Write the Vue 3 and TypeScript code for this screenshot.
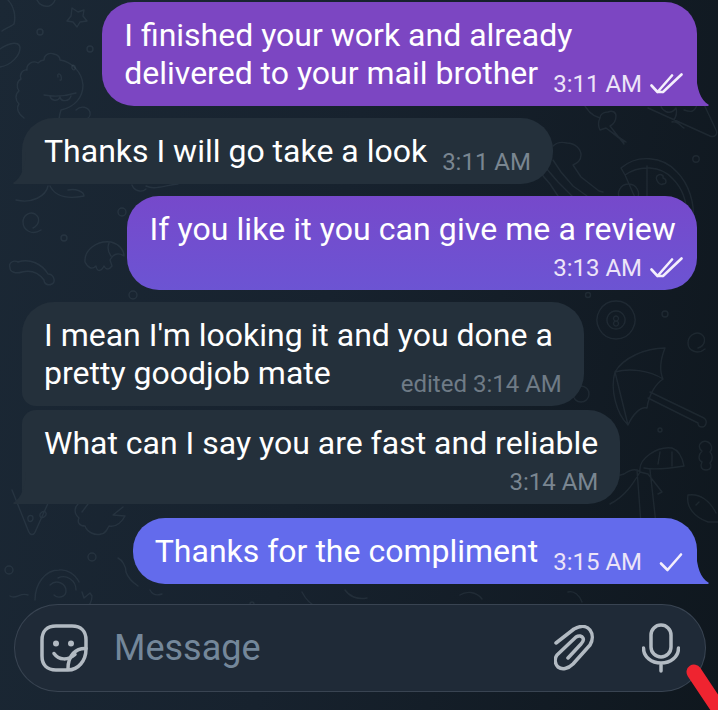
<script setup lang="ts">
interface Msg {
  out: boolean
  lines: string[]
  time: string
  layout: 'inline' | 'below'
  tail: boolean
  check?: 'single' | 'double'
  tone: string
  edited?: boolean
}

const messages: Msg[] = [
  { out: true, lines: ['I finished your work and already', 'delivered to your mail brother'], time: '3:11 AM', layout: 'inline', tail: true, check: 'double', tone: 'violet' },
  { out: false, lines: ['Thanks I will go take a look'], time: '3:11 AM', layout: 'inline', tail: true, tone: 'dark' },
  { out: true, lines: ['If you like it you can give me a review'], time: '3:13 AM', layout: 'below', tail: false, check: 'double', tone: 'indigo' },
  { out: false, lines: ["I mean I'm looking it and you done a", 'pretty goodjob mate'], time: 'edited 3:14 AM', layout: 'inline', tail: false, tone: 'dark', edited: true },
  { out: false, lines: ['What can I say you are fast and reliable'], time: '3:14 AM', layout: 'below', tail: true, tone: 'dark' },
  { out: true, lines: ['Thanks for the compliment'], time: '3:15 AM', layout: 'inline', tail: true, check: 'single', tone: 'blue' }
]

const doodles: string[] = [
  // star
  'M72 8l6 4 6-2-1 6 4 5-7 1-3 5-4-5-6-1 4-5z',
  // arcs top left
  'M8 0c6 6 8 16 6 24-2 2-8 4-12 7M37 0c2 5 8 7 12 6 3-1 5-3 6-6M0 67c12-2 20-12 20-19 0-4-4-6-10-4-4 1-7 3-10 5',
  // dino
  'M24 118c-6-4-8-10-5-14-4-4-4-10 0-13-3-4-2-10 2-12-2-5 2-10 6-9-1-6 6-10 11-7 2-2 3-3 6-3 0-5 5-8 10-6 4 1 6 3 6 6 12 2 22 12 23 25 0 12-8 22-22 25-2 6-2 10-3 14',
  'M44 95c10 2 22 1 32-2M50 96c1 5 8 6 10 1M60 97c1 5 9 5 11-1M58 77c-1-4 2-4 3-1 1 3 0 5-1 4M72 68c-1-3 3-4 3-1 1 3-2 4-3 1M76 110c5-5 12-3 14 2 1 4-2 7-6 8',
  // squid and pizza slice top right
  'M582 100c4 10 10 16 18 18 0-4 4-6 8-6 4-2 8 0 8 4 0 4-2 8-6 10l14 18M600 118c-2 4-2 8 0 12l6-2 18 14M606 128l20 14',
  'M648 108l62 28c5 2 8-2 6-6l-14-30M660 100c0 12 10 16 16 8 2 8-2 12-4 14 6-2 10 6 12 6M684 110c6 2 12 4 14-10',
  // jellyfish
  'M553 146c4-4 10-4 14-3 8 0 14 6 14 12 0 6-4 8-8 10l8 12 18 14 4 1M553 160l8 12 12 14 14 10M546 168l12 14 14 14 12 8M538 170l12 14 8 12 14 10',
  // pizza
  'M621 168c16-14 42-12 56 4 12 12 18 32 16 48M621 168l4 7c14-10 36-10 48 4 10 10 14 24 14 38M625 175l16 36 4 10M647 166v55M628 184a10 10 0 1 0 1 0M657 176c3-3 7-1 6 2 4 1 4 6 0 6-4 2-8-5-6-8',
  // 8 ball
  'M616 301a19 19 0 1 0 .01 0M616 311a9 9 0 1 0 .01 0M616 316a2.500 2.500 0 1 0 .01 0M616 321a2.500 2.500 0 1 0 .01 0',
  // umbrella
  'M615 372c8-14 30-24 50-24-4 10-6 22-2 31-6 4-14 14-16 29-6-2-14 6-19 17-12-12-18-36-13-53zM615 372c14-4 34-2 48 7M615 372l13 53M650 392l54 26c4 3 2 9-2 9-3 0-4-2-4-4M648 398l50 25',
  // palm
  'M610 478l14-4c6-4 12-6 16-2-2-14 18-26 32-24 6 2 10 8 12 18-12 2-30 4-40 2M640 472c-6 10-14 24-30 32M640 472l8 2 14 18-4 2M637 470l4 54M650 470l6 54M660 452l-2 12M672 452l0 14',
  // candy
  'M702 442c-4 3-3 7 0 9-4 4-4 9 0 11-2 4-1 8 4 8 5 0 6-4 4-7 3-3 3-8 0-11 3-3 2-8-2-10-2-1-4-1-6 0z',
  // fish
  'M688 495c12-2 22 6 28 18M688 495c-2 12 6 22 20 27l10 0M696 505l3-3',
  // spiral
  'M698 348c7-2 9-10 3-14-6-3-13 2-13 9 0 8 10 12 17 6',
  'M33 228c6-3 8-10 2-14-6-3-12 2-12 8 0 8 9 14 18 8',
  // shrimp
  'M85 262c-1-12 12-22 26-20 8 2 13 8 13 14-6-4-11-2-14 4l2 6c-3 4-6 4-8 0-3 6-7 6-8 0-4 4-8 2-11-4zM109 243c-2 5-1 9 2 13',
  // arch
  'M10 268c-2-6 4-8 8-6 12-4 24 2 30 12 6 0 8 8 4 10-4 2-8 0-8-4-6-8-14-10-22-8-6 2-12 0-12-4z',
  // figure below bubble 2
  'M16 200c16 4 30-4 32-14M50 186c4 8 14 14 34 10 0-4-8-8-16-6M132 185c2 6 10 8 14 4M146 186c8 4 16 0 32-2',
  // slice bottom left
  'M12 490l16 40c2 6 6 6 8 0l18-40M28 519c-1-4 5-5 5-1 0 4-5 5-5 1zM40 516c-1-3 5-7 6-3 1 3-5 7-6 3zM25 490l4 6',
  // cloud
  'M78 504c-4 4-4 10 1 14-2 4 0 8 6 8 2 6 10 10 16 8 4 0 6-4 8-8 8 2 14-6 16-10l-12-1 10-8M88 504l-6 8',
  // snail
  'M35 600c0-16 10-30 24-30 8-1 16 4 20 12M58 578c8-4 18 2 18 12M50 585c6-6 16-2 16 6 0 6-8 8-12 4M82 592l2 6 6-5 2 3c0 6-2 10-8 14M10 596c6 4 10-4 18-1',
  // other scraps
  'M118 558c4 2 8 8 8 14 2 6 6 10 12 14M150 590c2 4 6 6 12 4',
  'M302 592c4 8 8 12 14 14M345 590c4 6 12 10 22 8M460 595c6-4 16-4 22 4M568 592c6-2 12 4 14 10'
]

const circles: [number, number, number][] = [
  [40, 32, 3], [90, 49, 3], [696, 159, 3.200], [588, 295, 2.500], [665, 314, 3], [660, 430, 2], [122, 212, 4], [64, 238, 3], [133, 295, 4], [92, 557, 4], [9, 570, 4], [252, 604, 2], [581, 394, 8]
]
</script>

<template>
  <div class="screen">
    <svg class="wallpaper" width="718" height="710" viewBox="0 0 718 710" fill="none">
      <path v-for="(d, i) in doodles" :key="i" :d="d" />
      <circle v-for="(c, i) in circles" :key="'c' + i" :cx="c[0]" :cy="c[1]" :r="c[2]" />
    </svg>

    <div class="messages">
      <div
        v-for="(m, i) in messages"
        :key="i"
        class="bubble"
        :class="[m.out ? 'out' : 'in', m.tone, 'm' + i]"
      >
        <div v-for="(line, j) in m.lines" :key="j" class="line">
          <span class="text">{{ line }}</span>
          <span v-if="m.layout === 'inline' && j === m.lines.length - 1" class="meta" :class="{ edited: m.edited }">
            <span>{{ m.time }}</span>
            <svg v-if="m.check === 'double'" class="tick" width="34" height="24" viewBox="0 0 34 24" fill="none">
              <path d="M1.500 13.500 7.500 20 22 3.500M13 20 31.500 2.500M8 20h5" />
            </svg>
            <svg v-if="m.check === 'single'" class="tick" width="34" height="24" viewBox="0 0 34 24" fill="none">
              <path d="M11 13.500 17.500 20 31 4.500" />
            </svg>
          </span>
        </div>
        <div v-if="m.layout === 'below'" class="meta below">
          <span>{{ m.time }}</span>
          <svg v-if="m.check === 'double'" class="tick" width="34" height="24" viewBox="0 0 34 24" fill="none">
            <path d="M1.500 13.500 7.500 20 22 3.500M13 20 31.500 2.500M8 20h5" />
          </svg>
        </div>
        <svg v-if="m.tail && m.out" class="tail tail-out" width="14" height="32" viewBox="0 0 14 32">
          <path d="M0 0C1 14 4 26 13 31l-1 1H0Z" />
        </svg>
        <svg v-if="m.tail && !m.out" class="tail tail-in" width="14" height="32" viewBox="0 0 14 32">
          <path d="M14 0C13 14 10 26 1 31l1 1H14Z" />
        </svg>
      </div>
    </div>

    <div class="composer">
      <svg class="sticker" width="48" height="48" viewBox="0 0 48 48" fill="none">
        <path d="M28 46H16C7 46 2 41 2 32V16C2 7 7 2 16 2h16c9 0 14 5 14 14v9C46 37 38 46 28 46Z" />
        <path d="M46 24.500C36 24 28 31 28 45" />
        <path d="M14 29.500c5 7 14 7 21 1" />
        <circle class="dot" cx="16" cy="19.500" r="3" />
        <circle class="dot" cx="31" cy="19.500" r="3" />
      </svg>
      <span class="placeholder">Message</span>
      <svg class="clip" width="42" height="46" viewBox="0 0 42 46" fill="none">
        <path d="M2 18 20 4C27 0 33 1 36 5 39 9 39 15 36 20L19 39C14 44 8 45 4 42 1 39 0 34 3 30L22 12C25 10 28 11 29 13 30 15 29 17 27 19L14 33" />
      </svg>
      <svg class="mic" width="38" height="50" viewBox="0 0 38 50" fill="none">
        <rect x="9" y="2" width="20" height="32" rx="10" />
        <path d="M1.500 25c0 9 8 15 17.500 15s17.500-6 17.500-15M19 40v8" />
      </svg>
    </div>

    <svg class="scribble" width="40" height="50" viewBox="0 0 40 50" fill="none">
      <path d="M16 12 44 54" />
    </svg>
  </div>
</template>

<style>
html,
body {
  margin: 0;
  background: #141d27;
}
</style>

<style scoped>
.screen {
  position: relative;
  width: 718px;
  height: 710px;
  overflow: hidden;
  box-sizing: border-box;
  padding-top: 2px;
  font-family: Roboto, "Liberation Sans", sans-serif;
  background: linear-gradient(100deg, #1b2835 0%, #17222e 45%, #0f171e 100%);
}
.wallpaper {
  position: absolute;
  inset: 0;
  stroke: rgba(190, 215, 235, 0.08);
  stroke-width: 1.400;
  stroke-linecap: round;
  stroke-linejoin: round;
}
.messages {
  position: relative;
  display: flex;
  flex-direction: column;
  gap: 12px;
  padding: 0 21px 0 22px;
}
.bubble {
  position: relative;
  box-sizing: border-box;
  padding: 14px 13px 14px 22px;
  color: #fff;
  font-size: 32px;
  line-height: 38px;
}
.out {
  align-self: flex-end;
  border-radius: 32px 32px 0 32px;
}
.in {
  align-self: flex-start;
  border-radius: 32px 32px 32px 0;
  padding-right: 22px;
}
.violet {
  background: #7c46c2;
  fill: #7c46c2;
}
.indigo {
  background: linear-gradient(180deg, #7649cb, #6c54d3);
  padding-right: 21px;
  border-bottom-right-radius: 32px;
  letter-spacing: 0.08px;
}
.blue {
  background: #636bec;
  fill: #636bec;
}
.dark {
  background: #24303b;
  fill: #24303b;
}
.m3 {
  border-bottom-left-radius: 14px;
  margin-bottom: -8px;
}
.m4 {
  border-top-left-radius: 14px;
  margin-bottom: 2px;
}
.line {
  display: flex;
  justify-content: space-between;
  align-items: flex-end;
}
.text {
  white-space: nowrap;
}
.meta {
  display: flex;
  align-items: center;
  justify-content: flex-end;
  margin-left: 15px;
  margin-bottom: -6px;
  font-size: 24px;
  line-height: 28px;
  letter-spacing: 0;
  white-space: nowrap;
}
.out .meta {
  color: #ece4f8;
}
.in .meta {
  color: #7a8691;
}
.meta.below {
  margin-top: 6px;
}
.indigo .meta.below {
  margin-right: -8px;
}
.meta.edited {
  margin-left: 70px;
  color: #6f7b86;
}
.tick {
  margin-left: 8px;
  stroke: #f4effc;
  stroke-width: 2.600;
  stroke-linecap: round;
  stroke-linejoin: round;
}
.tail {
  position: absolute;
  bottom: 0;
}
.tail-out {
  right: -13px;
}
.tail-in {
  left: -10px;
}
.composer {
  position: relative;
  box-sizing: border-box;
  display: flex;
  align-items: center;
  width: 692px;
  height: 88px;
  margin: 20px 0 0 14px;
  padding: 0 25px 0 25px;
  border: 1px solid rgba(190, 205, 225, 0.16);
  border-radius: 44px;
  background: #1f2a37;
}
.composer svg {
  flex: none;
  stroke: #b2bac2;
  stroke-width: 3.500;
  stroke-linecap: round;
  stroke-linejoin: round;
}
.composer .dot {
  fill: #b2bac2;
  stroke: none;
}
.placeholder {
  margin-left: 26px;
  font-size: 36px;
  color: #74879a;
}
.clip {
  margin-left: auto;
}
.mic {
  margin-left: 46px;
}
.scribble {
  position: absolute;
  right: 0;
  bottom: 0;
  stroke: #ef2430;
  stroke-width: 15;
  stroke-linecap: round;
}
</style>
